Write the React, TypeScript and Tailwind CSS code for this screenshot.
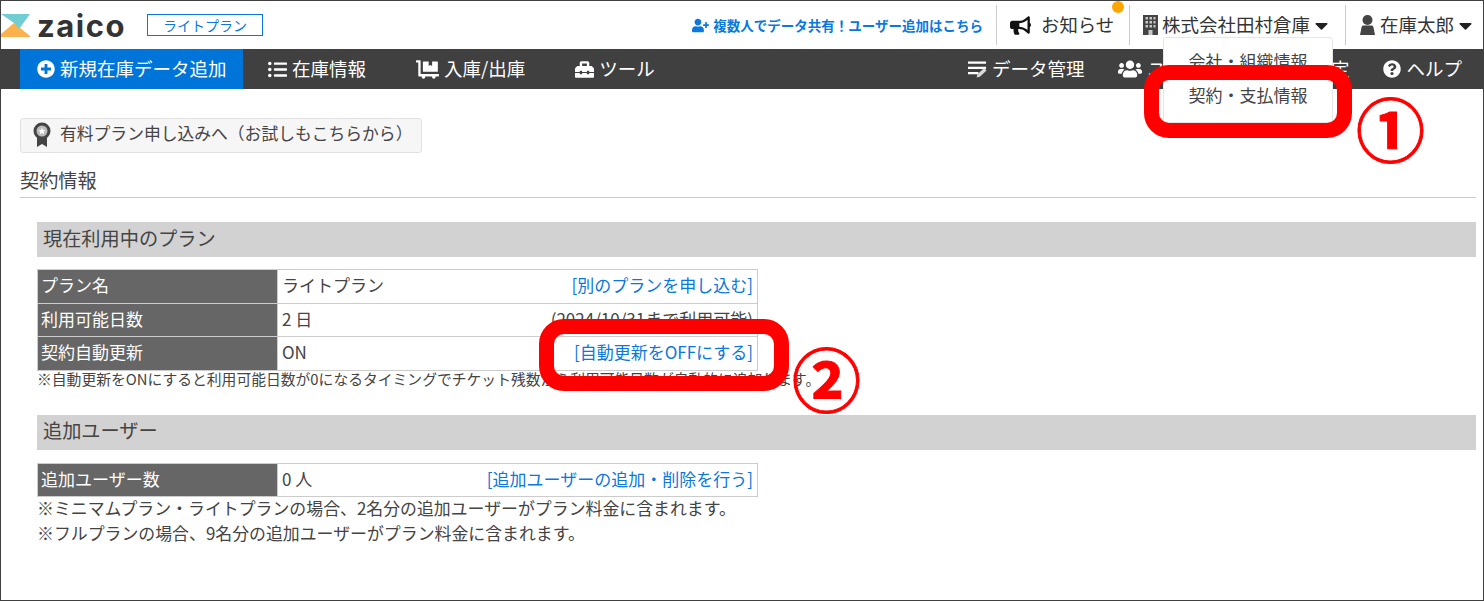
import React from "react";
import {
  FaBullhorn,
  FaCaretDown,
  FaDollyFlatbed,
  FaListUl,
  FaPlusCircle,
  FaQuestionCircle,
  FaToolbox,
  FaUserPlus,
  FaUsers,
} from "react-icons/fa";

const font = { fontFamily: '"Noto Sans CJK JP", "Noto Sans", sans-serif' };

function LogoMark() {
  return (
    <svg width="29" height="23" viewBox="0 0 29 23" className="shrink-0">
      <path d="M0 20L13 9l16 13v1H0z" fill="#fbb24c" />
      <path d="M0 0h29L18 15 13 9z" fill="#72ccd4" />
    </svg>
  );
}

function RibbonIcon() {
  return (
    <svg width="18" height="25" viewBox="0 0 18 25" className="shrink-0">
      <path d="M4 14v11l5-3 5 3V14z" fill="#444" />
      <circle cx="9" cy="9" r="8.5" fill="#444" />
      <circle cx="9" cy="9" r="5.5" fill="#bbb" />
      <path d="M9 5.5l1 2.4 2.6.2-2 1.7.6 2.5L9 11l-2.2 1.3.6-2.5-2-1.7 2.6-.2z" fill="#fff" />
    </svg>
  );
}

function DataIcon() {
  return (
    <svg width="19" height="19" viewBox="0 0 20 19" className="shrink-0">
      <path d="M0 1h19v2.5H0zM0 6.5h19V9H0zM0 12h11v2.5H0z" fill="#fff" />
      <path d="M9 18l1-3.5 7-6.5 2.5 2.5-7 6.5z" fill="#d8d8d8" />
    </svg>
  );
}

function BuildingIcon() {
  return (
    <svg width="15" height="20" viewBox="0 0 15 20" className="shrink-0">
      <path d="M0 0h15v20H0z" fill="#444" />
      <path
        d="M2.500 2h2.500v2.500H2.500zM6.500 2h2.500v2.500H6.500zM10.500 2h2v2.500h-2zM2.500 6h2.500v2.500H2.500zM6.500 6h2.500v2.500H6.500zM10.500 6h2v2.500h-2zM2.500 10h2.500v2.500H2.500zM6.500 10h2.500v2.500H6.500zM10.500 10h2v2.500h-2zM5.500 15h4v5h-4z"
        fill="#c8c8c8"
      />
    </svg>
  );
}

function UserIcon() {
  return (
    <svg width="15" height="20" viewBox="0 0 15 20" className="shrink-0">
      <circle cx="7.500" cy="5" r="5" fill="#444" />
      <path d="M3.500 10.500h8c1 0 1.500.5 2 2l1.500 7.500H0l1.500-7.500c.5-1.500 1-2 2-2z" fill="#444" />
    </svg>
  );
}

function NavItem({ icon, label, className = "" }: { icon: React.ReactNode; label: string; className?: string }) {
  return (
    <div className={`flex h-full items-center gap-[5px] whitespace-nowrap text-[18.5px] text-white ${className}`}>
      {icon}
      <span>{label}</span>
    </div>
  );
}

function SectionTitle({ children }: { children: React.ReactNode }) {
  return <div className="flex h-[35px] items-center bg-[#d2d2d2] pb-[3px] pl-[6px] text-[19.2px] text-[#444]">{children}</div>;
}

type Row = { label: string; value: string; right: string; link?: boolean };

function InfoTable({ rows }: { rows: Row[] }) {
  return (
    <table className="w-[721px] table-fixed border-collapse text-[17px] leading-none">
      <tbody>
        {rows.map((row) => (
          <tr key={row.label} className="h-[33.5px]">
            <th className="w-[240px] border border-[#ccc] bg-[#666] pb-[3px] pl-[3px] text-left font-normal text-white">{row.label}</th>
            <td className="border border-[#ccc] pb-[3px] pl-[4px] pr-[4px] text-[#444]">
              <div className="flex items-center justify-between whitespace-nowrap">
                <span>{row.value}</span>
                <span className={row.link ? "text-[#0a78dc]" : "text-[#444]"}>{row.right}</span>
              </div>
            </td>
          </tr>
        ))}
      </tbody>
    </table>
  );
}

function Callout({ className }: { className: string }) {
  return <div className={`absolute rounded-[25px] border-[15px] border-[#ff0000] ${className}`} />;
}

export default function App() {
  return (
    <div style={font} className="relative flex h-[601px] w-[1484px] flex-col overflow-hidden border border-[#404040] bg-white">
      <header className="flex h-[48px] shrink-0 items-center">
        <LogoMark />
        <span style={{ fontFamily: "Inter, sans-serif" }} className="ml-[7px] text-[31px] font-bold leading-none tracking-[1.5px] text-[#333]">
          zaico
        </span>
        <span className="ml-[21px] flex h-[22px] w-[116px] items-center justify-center border border-[#0a78dc] text-[14px] text-[#0a78dc]">
          ライトプラン
        </span>
        <div className="ml-auto flex h-full items-center">
          <div className="flex items-center gap-[4px] pr-[13px] text-[13.5px] font-bold text-[#0a78dc]">
            <FaUserPlus className="text-[17px]" />
            <span>複数人でデータ共有！ユーザー追加はこちら</span>
          </div>
          <div className="relative flex h-[40px] w-[133px] items-center gap-[10px] border-l border-[#ccc] pl-[13px] text-[18.4px] text-[#333]">
            <FaBullhorn className="text-[21px] text-[#111]" />
            <span>お知らせ</span>
            <span className="absolute -top-[4px] right-[5px] h-[12px] w-[12px] rounded-full bg-[#ffa500]" />
          </div>
          <div className="flex h-[40px] w-[216px] items-center gap-[4px] border-l border-[#ccc] pl-[13px] text-[18.5px] text-[#333]">
            <BuildingIcon />
            <span>株式会社田村倉庫</span>
            <FaCaretDown className="-ml-[3px] text-[21px] text-[#222]" />
          </div>
          <div className="flex h-[40px] w-[138px] items-center gap-[5px] border-l border-[#ccc] pl-[14px] text-[18.5px] text-[#333]">
            <UserIcon />
            <span>在庫太郎</span>
            <FaCaretDown className="-ml-[4px] text-[21px] text-[#222]" />
          </div>
        </div>
      </header>

      <nav className="flex h-[40px] shrink-0 items-center bg-[#404040] pl-[19px]">
        <NavItem icon={<FaPlusCircle className="text-[18px]" />} label="新規在庫データ追加" className="w-[223px] bg-[#0075d9] pl-[17px]" />
        <NavItem icon={<FaListUl className="text-[19px]" />} label="在庫情報" className="ml-[25px]" />
        <NavItem icon={<FaDollyFlatbed className="text-[23px]" />} label="入庫/出庫" className="ml-[50px]" />
        <NavItem icon={<FaToolbox className="text-[19px]" />} label="ツール" className="ml-[50px]" />
        <div className="ml-auto flex h-full items-center gap-[34px] pr-[21px]">
          <NavItem icon={<DataIcon />} label="データ管理" />
          <NavItem icon={<FaUsers className="text-[24px]" />} label="ユーザー・グループ設定" />
          <NavItem icon={<FaQuestionCircle className="text-[18px]" />} label="ヘルプ" />
        </div>
      </nav>

      <main className="flex flex-col pl-[19px] pr-[7px]">
        <div className="mt-[29px] flex h-[35px] w-[402px] items-center gap-[9px] rounded-[3px] border border-[#e2e2e2] bg-[#f6f6f6] pb-[3px] pl-[12px] text-[16.8px] text-[#444]">
          <RibbonIcon />
          <span className="whitespace-nowrap">有料プラン申し込みへ（お試しもこちらから）</span>
        </div>
        <h2 className="mt-[12px] flex h-[33px] items-center border-b border-[#ccc] pb-[2px] text-[19.2px] font-normal text-[#444]">契約情報</h2>
        <section className="ml-[17px]">
          <div className="mt-[24px]">
            <SectionTitle>現在利用中のプラン</SectionTitle>
          </div>
          <div className="mt-[12px]">
            <InfoTable
              rows={[
                { label: "プラン名", value: "ライトプラン", right: "[別のプランを申し込む]", link: true },
                { label: "利用可能日数", value: "2 日", right: "(2024/10/31まで利用可能)" },
                { label: "契約自動更新", value: "ON", right: "[自動更新をOFFにする]", link: true },
              ]}
            />
          </div>
          <p className="-mt-[2px] whitespace-nowrap text-[14.8px] leading-[20px] text-[#444]">
            ※自動更新をONにすると利用可能日数が0になるタイミングでチケット残数から利用可能日数が自動的に追加します。
          </p>
          <div className="mt-[26px]">
            <SectionTitle>追加ユーザー</SectionTitle>
          </div>
          <div className="mt-[13px]">
            <InfoTable rows={[{ label: "追加ユーザー数", value: "0 人", right: "[追加ユーザーの追加・削除を行う]", link: true }]} />
          </div>
          <p className="-mt-[2px] text-[16.9px] leading-[25px] text-[#444]">※ミニマムプラン・ライトプランの場合、2名分の追加ユーザーがプラン料金に含まれます。</p>
          <p className="text-[16.9px] leading-[25px] text-[#444]">※フルプランの場合、9名分の追加ユーザーがプラン料金に含まれます。</p>
        </section>
      </main>

      <div className="absolute left-[1162px] top-[36px] flex h-[86px] w-[170px] flex-col items-center rounded-[3px] border border-[#e6e6e6] bg-white pt-[11px] text-[17px] leading-[24px] text-[#444]">
        <span>会社・組織情報</span>
        <span className="mt-[10px]">契約・支払情報</span>
      </div>
      <Callout className="left-[1143px] top-[64px] h-[73px] w-[208px]" />
      <Callout className="left-[538px] top-[318px] h-[72px] w-[250px]" />
      <span className="absolute left-[1355px] top-[78px] text-[69px] font-bold leading-[96px] text-[#ff0000] [-webkit-text-stroke:1px_#ff0000]">①</span>
      <span className="absolute left-[791px] top-[328px] text-[69px] font-bold leading-[96px] text-[#ff0000] [-webkit-text-stroke:1px_#ff0000]">②</span>
    </div>
  );
}
